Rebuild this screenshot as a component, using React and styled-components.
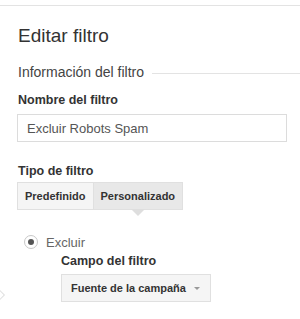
import React, { useState } from "react";
import styled, { createGlobalStyle } from "styled-components";

const GlobalStyle = createGlobalStyle`
  html, body {
    margin: 0;
    padding: 0;
    background: #fff;
  }
  body {
    font-family: "Liberation Sans", Arial, sans-serif;
    color: #333;
  }
`;

const StyledPage = styled.div`
  position: relative;
  width: 300px;
  height: 319px;
  overflow: hidden;
  padding-top: 5px;
  box-sizing: border-box;
`;

const StyledPanel = styled.div`
  border-top: 1px solid #e3e3e3;
  padding-left: 17px;
`;

const StyledTitle = styled.h1`
  margin: 18px 0 0 1px;
  font-size: 19px;
  line-height: 24px;
  font-weight: normal;
  color: #333;
`;

const StyledSection = styled.div`
  display: flex;
  align-items: flex-end;
  margin-top: 15px;
  font-size: 14px;
  line-height: 18px;
  color: #444;
  padding-left: 1px;
  &::after {
    content: "";
    flex: 1;
    border-top: 1px solid #e3e3e3;
    margin: 0 0 7px 8px;
  }
`;

const StyledLabel = styled.div`
  margin-top: ${(props) => props.top}px;
  margin-left: ${(props) => props.indent || 1}px;
  font-size: 12.5px;
  line-height: 16px;
  font-weight: bold;
  color: #333;
`;

const StyledInput = styled.input`
  display: block;
  margin-top: 6px;
  width: 270px;
  height: 28px;
  box-sizing: border-box;
  border: 1px solid #dcdcdc;
  padding: 0 9px;
  font-family: inherit;
  font-size: 13px;
  color: #555;
  outline: none;
`;

const StyledGroup = styled.div`
  display: flex;
  margin-top: 3px;
`;

const StyledSegment = styled.button`
  position: relative;
  height: 28px;
  padding: 0 7px;
  border: 1px solid #e0e0e0;
  margin-left: ${(props) => (props.first ? 0 : -1)}px;
  background: ${(props) => (props.active ? "#e8e8e8" : "#f5f5f5")};
  font-family: inherit;
  font-size: 11px;
  font-weight: bold;
  color: #333;
  cursor: pointer;
  &::after {
    content: "";
    display: ${(props) => (props.active ? "block" : "none")};
    position: absolute;
    left: 50%;
    top: 100%;
    margin-left: -7px;
    border-left: 7px solid transparent;
    border-right: 7px solid transparent;
    border-top: 7px solid #dedede;
  }
`;

const StyledRadioRow = styled.label`
  display: flex;
  align-items: center;
  gap: 8px;
  margin: 24px 0 0 7px;
  height: 16px;
  font-size: 13px;
  color: #666;
`;

const StyledRadio = styled.span`
  width: 14px;
  height: 14px;
  box-sizing: border-box;
  border: 1px solid #c8c8c8;
  border-radius: 50%;
  display: flex;
  align-items: center;
  justify-content: center;
  &::after {
    content: "";
    width: 6px;
    height: 6px;
    border-radius: 50%;
    background: #555;
  }
`;

const StyledSelect = styled.div`
  display: flex;
  align-items: center;
  justify-content: space-between;
  margin: 5px 0 0 44px;
  width: 150px;
  height: 28px;
  box-sizing: border-box;
  padding: 0 10px 0 9px;
  border: 1px solid #e0e0e0;
  background: #f5f5f5;
  font-size: 11px;
  font-weight: bold;
  color: #333;
`;

const StyledCaret = styled.span`
  border-left: 3px solid transparent;
  border-right: 3px solid transparent;
  border-top: 3px solid #999;
`;

const StyledEdge = styled.div`
  position: absolute;
  left: -7px;
  top: 290px;
  width: 8px;
  height: 8px;
  border: 1px solid #e0e0e0;
  transform: rotate(45deg);
`;

const App = () => {
  const [type, setType] = useState("custom");
  const [name, setName] = useState("Excluir Robots Spam");

  return (
    <StyledPage>
      <GlobalStyle />
      <StyledPanel>
        <StyledTitle>Editar filtro</StyledTitle>
        <StyledSection>Información del filtro</StyledSection>
        <StyledLabel top={11}>Nombre del filtro</StyledLabel>
        <StyledInput value={name} onChange={(e) => setName(e.target.value)} />
        <StyledLabel top={21}>Tipo de filtro</StyledLabel>
        <StyledGroup>
          <StyledSegment
            first
            active={type === "predefined"}
            onClick={() => setType("predefined")}
          >
            Predefinido
          </StyledSegment>
          <StyledSegment
            active={type === "custom"}
            onClick={() => setType("custom")}
          >
            Personalizado
          </StyledSegment>
        </StyledGroup>
        <StyledRadioRow>
          <StyledRadio />
          Excluir
        </StyledRadioRow>
        <StyledLabel top={3} indent={44}>
          Campo del filtro
        </StyledLabel>
        <StyledSelect>
          Fuente de la campaña
          <StyledCaret />
        </StyledSelect>
      </StyledPanel>
      <StyledEdge />
    </StyledPage>
  );
};

export default App;
